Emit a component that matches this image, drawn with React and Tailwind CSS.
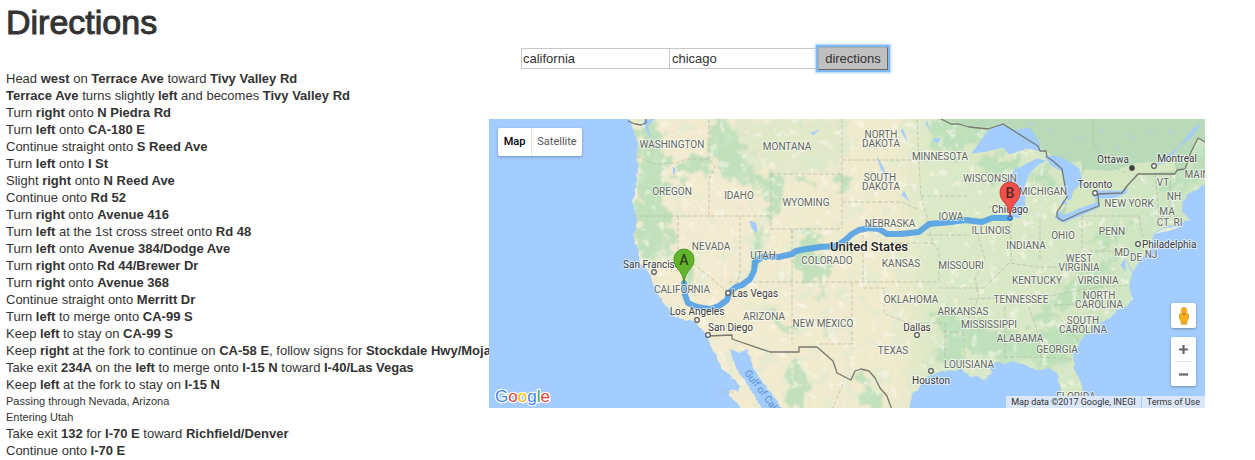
import React from "react";

const STEPS = [
  ["Head *west* on *Terrace Ave* toward *Tivy Valley Rd*"],
  ["*Terrace Ave* turns slightly *left* and becomes *Tivy Valley Rd*"],
  ["Turn *right* onto *N Piedra Rd*"],
  ["Turn *left* onto *CA-180 E*"],
  ["Continue straight onto *S Reed Ave*"],
  ["Turn *left* onto *I St*"],
  ["Slight *right* onto *N Reed Ave*"],
  ["Continue onto *Rd 52*"],
  ["Turn *right* onto *Avenue 416*"],
  ["Turn *left* at the 1st cross street onto *Rd 48*"],
  ["Turn *left* onto *Avenue 384/Dodge Ave*"],
  ["Turn *right* onto *Rd 44/Brewer Dr*"],
  ["Turn *right* onto *Avenue 368*"],
  ["Continue straight onto *Merritt Dr*"],
  ["Turn *left* to merge onto *CA-99 S*"],
  ["Keep *left* to stay on *CA-99 S*"],
  ["Keep *right* at the fork to continue on *CA-58 E*, follow signs for *Stockdale Hwy/Mojave*"],
  ["Take exit *234A* on the *left* to merge onto *I-15 N* toward *I-40/Las Vegas*"],
  ["Keep *left* at the fork to stay on *I-15 N*", "Passing through Nevada, Arizona", "Entering Utah"],
  ["Take exit *132* for *I-70 E* toward *Richfield/Denver*"],
  ["Continue onto *I-70 E*"],
];

function Instruction({ text }) {
  return text.split("*").map((part, i) => (i % 2 ? <b key={i}>{part}</b> : part));
}

const STATES = [
  ["WASHINGTON", 183, 29], ["OREGON", 183, 76], ["CALIFORNIA", 193, 174], ["NEVADA", 222, 131],
  ["IDAHO", 250, 80], ["MONTANA", 298, 31], ["WYOMING", 317, 87], ["UTAH", 274, 140],
  ["COLORADO", 338, 145], ["ARIZONA", 275, 201], ["NEW MEXICO", 334, 208], ["NORTH", 392, 19],
  ["DAKOTA", 392, 28], ["SOUTH", 391, 62], ["DAKOTA", 392, 71], ["NEBRASKA", 401, 108],
  ["KANSAS", 412, 148], ["OKLAHOMA", 422, 184], ["TEXAS", 404, 235], ["MINNESOTA", 451, 41],
  ["IOWA", 462, 101], ["MISSOURI", 472, 150], ["ARKANSAS", 474, 196], ["LOUISIANA", 480, 249],
  ["WISCONSIN", 501, 63], ["MICHIGAN", 554, 76], ["ILLINOIS", 502, 115], ["INDIANA", 537, 130],
  ["OHIO", 574, 120], ["KENTUCKY", 548, 165], ["TENNESSEE", 532, 184], ["MISSISSIPPI", 500, 209],
  ["ALABAMA", 531, 223], ["GEORGIA", 568, 234], ["WEST", 590, 143], ["VIRGINIA", 590, 152],
  ["VIRGINIA", 609, 165], ["NORTH", 610, 180], ["CAROLINA", 610, 189], ["SOUTH", 594, 205],
  ["CAROLINA", 594, 214], ["PENN", 623, 116], ["NEW YORK", 640, 88], ["VT", 674, 67],
  ["NH", 685, 81], ["MA", 678, 96], ["CT", 674, 107], ["RI", 689, 107],
  ["MD", 633, 137], ["DE", 647, 142], ["NJ", 662, 139], ["MAINE", 711, 59], ["FLORIDA", 587, 281],
];

const CITIES = [
  ["San Francisco", 134, 149, 165, 153, "start"],
  ["Los Angeles", 208, 196, 208, 201, "middle"],
  ["San Diego", 219, 212, 219, 216, "start"],
  ["Las Vegas", 243, 178, 239, 174, "start"],
  ["Dallas", 428, 212, 428, 216, "middle"],
  ["Houston", 442, 265, 442, 252, "middle"],
  ["Ottawa", 624, 44, 643, 49, "middle"],
  ["Montreal", 688, 43, 665, 47, "middle"],
  ["Toronto", 606, 69, 606, 74, "middle"],
  ["Philadelphia", 653, 129, 649, 125, "start"],
];

const LAND =
  "M139 -2L143 8L146 14L149 25L147 36L149 50L147 68L144 85L148 100L145 118L148 130L152 145L161 155L164 165L168 172L176 186L183 194L188 199L205 202L213 210L218 216L222 228L229 239L234 251L241 256L251 266L249 273L241 270L240 276L248 283L251 291L274 291L261 269L248 251L243 238L241 229L250 234L258 230L264 248L274 264L289 283L293 291L420 291L422 280L427 271L434 263L440 257L453 252L473 251L480 257L489 258L495 261L503 254L500 247L506 244L519 244L523 242L539 247L548 252L559 249L569 254L571 267L576 291L594 291L594 277L593 267L586 251L584 234L593 219L604 210L613 203L624 197L630 190L637 188L644 180L641 172L640 162L643 155L648 145L654 138L663 127L664 114L676 109L688 106L693 102L701 102L698 97L693 93L694 82L701 73L710 70L718 62L718 -2Z";

const GREEN_PATCHES = [
  "M148 0L166 0L172 20L178 50L174 90L182 112L188 135L198 145L206 170L198 166L186 138L172 118L175 140L163 145L148 128L146 90L150 50Z",
  "M215 0L240 0L252 22L262 48L284 60L288 76L276 80L262 64L240 62L222 40Z",
  "M188 40L216 36L222 52L202 56L190 62Z",
  "M284 52L294 60L290 90L278 100L282 78Z",
  "M310 50L322 62L324 72L312 62Z",
  "M350 56L362 64L356 76L348 72Z",
  "M268 100L274 112L270 130L276 142L264 150L262 130Z",
  "M308 120L330 112L336 122L326 130L342 146L336 160L332 180L328 162L312 158L306 140Z",
  "M278 182L290 196L302 210L298 216L284 204Z",
  "M302 236L310 244L316 260L318 291L300 291L296 262Z",
  "M336 196L341 206L336 218L332 210Z",
  "M368 262L378 256L390 274L398 291L378 291Z",
  "M444 192L462 192L476 206L474 240L450 246L442 240L456 224L450 204Z",
  "M478 222L514 210L548 216L560 204L596 206L604 196L618 190L610 204L590 220L580 238L576 246L550 250L520 242L490 236Z",
  "M540 198L560 180L592 160L622 138L632 130L620 152L604 172L574 192L552 204Z",
  "M442 0L500 0L514 8L478 32L466 38L446 24Z",
  "M490 36L520 36L532 42L520 58L496 60Z",
  "M546 50L562 52L570 66L562 74L548 70Z",
  "M676 60L700 50L712 24L718 30L718 52L698 68L680 86Z",
  "M474 206L492 198L500 218L490 236L478 230Z",
  "M596 122L612 108L636 106L640 114L616 130Z",
];

const STATE_LINES =
  "M147 36L163 45L186 44L198 40L220 40M220 0V40L226 48L220 60V97M144 97H282M189 97V132L240 174M251 97V154L244 180M240 163H450M282 55H353M282 55V110H353M303 110V225M303 110V119M353 0V110M353 41H430M353 83H413L428 90M374 110V164M374 169H395V195L420 204L452 204M363 164V225H328M428 0L430 44L432 77L438 98L444 124L450 132V164M432 77H478M438 116H482M405 124H446M450 169H496M454 213H474M456 204V250M478 98L486 108L496 140L486 160L490 178L474 214L476 236M500 88H522M522 98V142M551 100V140M480 180L560 177L610 168L640 166M516 188V238M540 188L550 218L552 238M515 238H552L582 240M568 196L590 222M564 186L612 184M592 97H650M593 97V132H644M593 132L568 148L548 148L520 144L500 164M650 97L654 120M604 0V22L616 44L636 54M666 55L670 97M682 55L680 90M666 97H692M229 273H246M343 291L355 262";

export default function App() {
  return (
    <div className="grid min-h-screen grid-cols-[489px_minmax(0,1fr)] items-start bg-white font-['Liberation_Sans',Arial,sans-serif] text-[13px] text-[#333]">
      <section className="overflow-hidden pl-[6px]">
        <h1 className="mb-[26px] text-[34px] leading-[44px] font-normal [-webkit-text-stroke:1px_#333]">Directions</h1>
        <ol className="leading-[17px] whitespace-nowrap">
          {STEPS.map(([text, ...notes]) => (
            <li key={text}>
              <Instruction text={text} />
              {notes.map((note) => (
                <p key={note} className="text-[11px] leading-4">{note}</p>
              ))}
            </li>
          ))}
        </ol>
      </section>

      <main className="pt-[47px] pr-[50px]">
        <form className="mb-[49px] ml-8 flex items-center" onSubmit={(e) => e.preventDefault()}>
          <input aria-label="Start" defaultValue="california" className="h-[21px] w-[149px] border border-[#c8c8c8] px-px outline-none" />
          <input aria-label="End" defaultValue="chicago" className="h-[21px] w-[148px] border border-l-0 border-[#c8c8c8] px-[2px] outline-none" />
          <button type="submit" className="h-[23px] w-[70px] border border-t-[#aaa] border-r-[#666] border-b-[#666] border-l-[#aaa] bg-[#c0c0c0] shadow-[0_0_0_2px_#7db8fb,0_0_2px_3px_#a9d0fc]">
            directions
          </button>
        </form>

        <div className="relative overflow-hidden bg-[#a3ccff] font-[Roboto,sans-serif]">
          <MapCanvas />
          <div className="absolute top-[9px] left-[9px] flex h-7 rounded-xs bg-white text-[11px] shadow-[0_1px_3px_rgba(0,0,0,0.3)]">
            <button type="button" className="w-[34px] border-r border-[#e6e6e6] font-medium text-black">Map</button>
            <button type="button" className="w-[50px] text-[#565656]">Satellite</button>
          </div>
          <div className="absolute right-[9px] bottom-[22px] flex w-[25px] flex-col gap-[9px]">
            <button type="button" aria-label="Street View" className="flex h-[25px] items-center justify-center rounded-xs bg-white shadow-[0_1px_3px_rgba(0,0,0,0.3)]">
              <svg width="12" height="18" viewBox="0 0 12 18">
                <path d="M3 6L1.5 8v4l1.2.5.6 4.8h2.2l.5-3 .5 3h2.2l.6-4.8 1.2-.5V8L9 6z" fill="#fbb117" stroke="#c98a1d" strokeWidth=".7" />
                <circle cx="6" cy="3.3" r="2.8" fill="#fbb117" stroke="#d08e18" strokeWidth=".6" />
                <path d="M4 6.2L6 9l2-2.8z" fill="#e8711a" />
              </svg>
            </button>
            <div className="flex flex-col items-center rounded-xs bg-white shadow-[0_1px_3px_rgba(0,0,0,0.3)]">
              <button type="button" aria-label="Zoom in" className="flex h-6 w-full items-center justify-center">
                <svg width="9" height="9" viewBox="0 0 9 9"><path d="M0 4.5h9M4.500 0v9" stroke="#666" strokeWidth="2.200" /></svg>
              </button>
              <span className="h-px w-[17px] bg-[#e0e0e0]" />
              <button type="button" aria-label="Zoom out" className="flex h-6 w-full items-center justify-center">
                <svg width="9" height="9" viewBox="0 0 9 9"><path d="M0 4.500h9" stroke="#666" strokeWidth="2.200" /></svg>
              </button>
            </div>
          </div>
          <div className="absolute right-0 bottom-0 flex gap-px text-[9px] leading-3 text-[#333]">
            <span className="bg-[#dbe7f8] px-[5px]">Map data ©2017 Google, INEGI</span>
            <a href="#terms" className="bg-[#dbe7f8] px-[5px]">Terms of Use</a>
          </div>
        </div>
      </main>
    </div>
  );
}

function Marker({ x, y, letter, fill, stroke }) {
  return (
    <g transform={`translate(${x} ${y})`}>
      <path d="M0 0C-1-9-3-11-6-15C-8.500-18-10-20-10-25A10 10 0 0 1 10-25C10-20 8.500-18 6-15C3-11 1-9 0 0Z" fill={fill} stroke={stroke} strokeWidth=".8" />
      <text y="-19.500" textAnchor="middle" fontSize="14" fontWeight="500" fill="#222" fillOpacity=".8">{letter}</text>
    </g>
  );
}

function MapCanvas() {
  return (
    <svg viewBox="0 0 716 289" preserveAspectRatio="xMidYMid slice" className="block h-[289px] w-full">
      <defs>
        <linearGradient id="land">
          <stop offset="0.2" stopColor="#f2ebcf" />
          <stop offset="0.46" stopColor="#efebcd" />
          <stop offset="0.52" stopColor="#dde9c6" />
          <stop offset="0.68" stopColor="#dae8c5" />
          <stop offset="0.9" stopColor="#cfe5c2" />
        </linearGradient>
        <filter id="rough" x="-5%" y="-5%" width="110%" height="110%">
          <feTurbulence type="fractalNoise" baseFrequency=".08" numOctaves="4" seed="4" result="n" />
          <feDisplacementMap in="SourceGraphic" in2="n" scale="30" xChannelSelector="R" yChannelSelector="G" />
          <feGaussianBlur stdDeviation="1.300" />
        </filter>
        <filter id="coast" x="-2%" y="-2%" width="104%" height="104%">
          <feTurbulence type="fractalNoise" baseFrequency=".15" numOctaves="2" seed="8" result="n" />
          <feDisplacementMap in="SourceGraphic" in2="n" scale="4" xChannelSelector="R" yChannelSelector="G" />
        </filter>
        <filter id="mottle" x="0" y="0" width="100%" height="100%">
          <feTurbulence type="fractalNoise" baseFrequency=".06" numOctaves="4" seed="11" />
          <feColorMatrix values="0 0 0 0 .65  0 0 0 0 .83  0 0 0 0 .66  6 0 0 0 -3.300" />
          <feGaussianBlur stdDeviation=".6" />
        </filter>
        <filter id="specks" x="0" y="0" width="100%" height="100%">
          <feTurbulence type="fractalNoise" baseFrequency=".1" numOctaves="3" seed="27" />
          <feColorMatrix values="0 0 0 0 .95  0 0 0 0 .94  0 0 0 0 .84  0 7 0 0 -4.300" />
          <feGaussianBlur stdDeviation=".6" />
        </filter>
        <clipPath id="landClip"><path d={LAND} /></clipPath>
      </defs>
      <rect width="716" height="289" fill="#a3ccff" />
      <path d={LAND} fill="url(#land)" filter="url(#coast)" />
      <g clipPath="url(#landClip)">
        <path d="M240 0H353V50L300 52L262 46Z" fill="#e2e9c9" filter="url(#rough)" />
        <g filter="url(#rough)" fill="#b9deb8" opacity=".85">
          {GREEN_PATCHES.map((d) => <path key={d} d={d} />)}
        </g>
        <rect width="716" height="289" filter="url(#mottle)" opacity=".35" />
        <rect width="716" height="289" filter="url(#specks)" opacity=".55" />
        <path d="M452 0L480 7L499 10L514 5L549 27L557 32L573 45L592 42L594 60L582 66L578 84L570 97L610 86L609 74L633 73L649 55L686 55L696 48L709 18L716 23V0Z" fill="#b9dab8" />
        <path d="M596 50L622 52L648 44L684 42L688 52L649 55L633 72L606 74L606 86L576 96L578 82L590 66Z" fill="#d5e7c0" />
      </g>
      <g fill="#a3ccff" stroke="#a3ccff" strokeLinejoin="round">
        <path d="M483 34L490 25L499 12L514 5L526 12L540 9L549 22L552 32L538 29L520 35L514 28L498 32Z" />
        <path d="M548 40L536 46L529 50L526 64L522 82L523 97L530 99L536 88L535 68L540 54L550 45L556 42Z" />
        <path d="M515 65L528 48L525 60L518 74Z" />
        <path d="M556 37L570 38L582 44L590 50L594 66L600 68L590 66L583 72L582 80L578 81L576 68L573 52L562 46Z" />
        <path d="M566 98L571 92L574 97L590 90L610 83L610 88L592 96L576 103L570 102Z" />
        <path d="M604 76L608 72L633 72L638 67L637 74L624 79L606 79Z" />
        <path d="M574 81L578 84L574 86Z" />
        <path d="M261 102L264 110L268 113L267 105ZM155 2L165 0L158 8L162 18L158 12ZM184 48L185 55L186 50Z" />
        <path d="M322 14L330 11L324 16ZM388 38L394 48L398 60L392 50ZM415 72L420 82L413 76ZM412 12L418 22L414 10ZM443 20L448 24L452 19M437 4L440 10L438 2" strokeWidth=".6" />
        <path d="M690 28L702 18L712 4L704 10ZM666 47L680 36L690 28L678 42ZM632 146L636 140L636 152ZM638 142L644 154L640 147" strokeWidth=".8" />
        <path d="M640 16L646 20M610 10L614 14M588 18L592 22M660 14L664 10M680 10L684 16M626 28L630 30M560 10L564 13M540 5L545 4" fill="none" />
      </g>
      <path d="M664 115L676 109L694 107L680 112Z" fill="#e8ecd8" />
      <path d={STATE_LINES} fill="none" stroke="#b5baa5" strokeWidth=".7" strokeDasharray="4 2" />
      <path
        d="M139 2L146 5L152 6L157 4L157 0M452 0L462 5L470 5L480 8L499 10L514 5L549 27L551 32L557 32L558 38L564 42L573 50L576 67L578 78L568 93L568 98L574 102L589 95L610 87L609 75L633 74L638 67L649 55L686 55L688 51L696 50L702 33L709 19L716 23M219 217L243 216V220L281 233H310V228H328L344 242L348 254L362 261L366 252L372 250L380 252L386 259L391 269L398 277L403 291"
        fill="none" stroke="#77786f" strokeWidth="1.300" strokeLinejoin="round"
      />
      <path
        d="M195 164L196 176L199 184L208 188L221 190L230 187L238 181L240 174L247 168L253 166L261 160L265 152L266 143L273 138L290 138L303 135L307 132L317 130L332 128L347 127L355 122L363 115L370 111L380 109L390 110L398 115L412 115L430 113L435 109L440 105L462 103L476 101L493 103L503 99L521 99"
        fill="none" stroke="#3f97ea" strokeOpacity=".8" strokeWidth="6" strokeLinejoin="round" strokeLinecap="round"
      />
      <g stroke="#fff" strokeOpacity=".6" strokeWidth="2" strokeLinejoin="round" className="[paint-order:stroke]">
        <g fontSize="10" fill="#626762" textAnchor="middle">
          {STATES.map(([name, x, y]) => <text key={`${name}-${x}-${y}`} x={x} y={y}>{name}</text>)}
        </g>
        <g fontSize="10" fill="#3c3c3c">
          {CITIES.map(([name, x, y, , , anchor]) => <text key={name} x={x} y={y} textAnchor={anchor}>{name}</text>)}
          <text x="521" y="94" textAnchor="middle">Chicago</text>
        </g>
        <text x="380" y="132" textAnchor="middle" fontSize="13" fontWeight="500" fill="#222">United States</text>
      </g>
      <text transform="translate(255 254) rotate(53)" fontSize="10" fill="#5b8fd0">Gulf of California</text>
      <g fill="#fff" stroke="#555" strokeWidth="1.200">
        {CITIES.map(([name, , , x, y]) => <circle key={name} cx={x} cy={y} r="2.300" />)}
      </g>
      <circle cx="643" cy="49" r="1.500" fill="#333" stroke="#333" />
      <circle cx="521" cy="99" r="2.200" fill="#5aa7f0" stroke="#1b5fae" />
      <Marker x={195} y={165} letter="A" fill="#62b52a" stroke="#3d8a14" />
      <Marker x={521} y={98} letter="B" fill="#f25048" stroke="#b8332d" />
      <text x="6" y="283" fontFamily="Liberation Sans, sans-serif" fontSize="17" stroke="#fff" strokeWidth="2.500" strokeLinejoin="round" className="[paint-order:stroke]">
        <tspan fill="#4285f4">G</tspan><tspan fill="#ea4335">o</tspan><tspan fill="#fbbc05">o</tspan><tspan fill="#4285f4">g</tspan><tspan fill="#34a853">l</tspan><tspan fill="#ea4335">e</tspan>
      </text>
    </svg>
  );
}
